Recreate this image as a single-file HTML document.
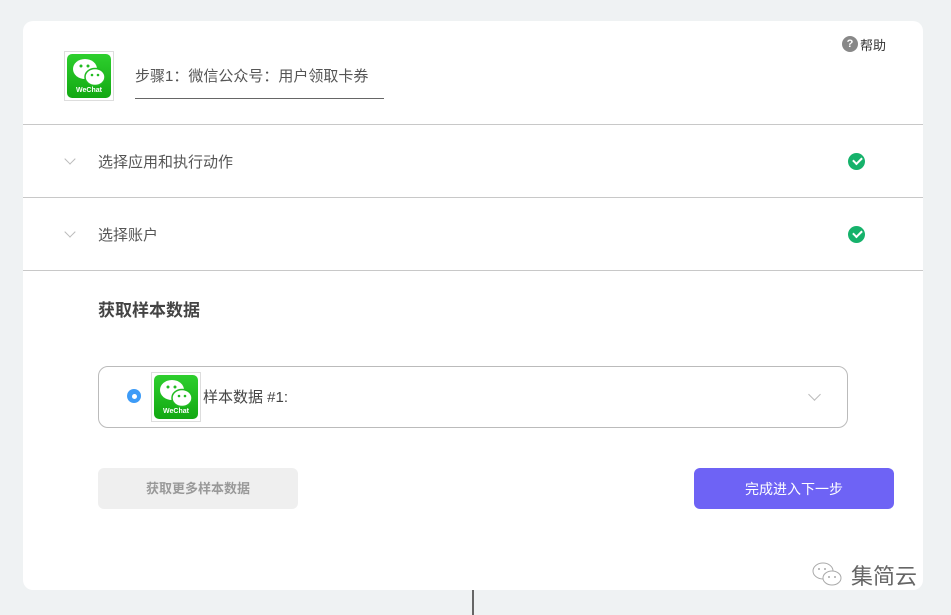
<!DOCTYPE html>
<html><head><meta charset="utf-8"><style>
*{margin:0;padding:0;box-sizing:border-box}
body{width:951px;height:615px;background:#eff2f3;font-family:"Liberation Sans","Noto Sans CJK SC",sans-serif;position:relative;overflow:hidden;color:#555}
.card{position:absolute;left:23px;top:21px;width:900px;height:569px;background:#fff;border-radius:10px}
.abs{position:absolute}
.line{position:absolute;left:0;width:900px;height:1px;background:#c8c8c8}
.wc{position:absolute;border:1px solid #ddd;background:#fff}
.wc .g{position:absolute;left:2px;top:2px;right:2px;bottom:2px;background:linear-gradient(#2ecf2e,#12a812);border-radius:5px}
.wc .t{position:absolute;left:0;right:0;bottom:4px;text-align:center;color:#fff;font-size:7px;font-weight:bold}
.chev{position:absolute;width:8px;height:8px;border-right:1.5px solid #bbb;border-bottom:1.5px solid #bbb;transform:rotate(45deg)}
.ok{position:absolute;width:17px;height:17px;border-radius:50%;background:#16b26b}
.ok:after{content:"";position:absolute;left:5px;top:4px;width:7px;height:4px;border-left:2px solid #fff;border-bottom:2px solid #fff;transform:rotate(-45deg)}
</style></head><body>
<div class="card">
  <div class="wc" style="left:41px;top:30px;width:50px;height:50px"><div class="g">
    <svg class="abs" style="left:4px;top:4px" width="38" height="30"><ellipse cx="14" cy="11" rx="12" ry="10" fill="#fff"/><ellipse cx="24" cy="19" rx="10" ry="8.5" fill="#fff" stroke="#22bb22" stroke-width="1.5"/><circle cx="10" cy="8" r="1.5" fill="#2b2"/><circle cx="17" cy="8" r="1.5" fill="#2b2"/><circle cx="21" cy="17" r="1.3" fill="#2b2"/><circle cx="27" cy="17" r="1.3" fill="#2b2"/></svg>
    <div class="t">WeChat</div></div></div>
  <div class="abs" style="left:112px;top:44px;font-size:15px;color:#555">步骤1：微信公众号：用户领取卡券</div>
  <div class="abs" style="left:112px;top:77px;width:249px;height:1px;background:#666"></div>
  <div class="abs" style="left:819px;top:15px;width:16px;height:16px;border-radius:50%;background:#888;color:#fff;font-size:11px;font-weight:bold;text-align:center;line-height:16px">?</div>
  <div class="abs" style="left:837px;top:14px;font-size:13px;color:#333">帮助</div>
  <div class="line" style="top:103px"></div>
  <div class="chev" style="left:43px;top:134px"></div>
  <div class="abs" style="left:75px;top:130px;font-size:15px">选择应用和执行动作</div>
  <div class="ok" style="left:825px;top:132px"></div>
  <div class="line" style="top:176px"></div>
  <div class="chev" style="left:43px;top:207px"></div>
  <div class="abs" style="left:75px;top:203px;font-size:15px">选择账户</div>
  <div class="ok" style="left:825px;top:205px"></div>
  <div class="line" style="top:249px"></div>
  <div class="abs" style="left:75px;top:275px;font-size:17px;font-weight:bold;color:#444">获取样本数据</div>
  <div class="abs" style="left:75px;top:345px;width:750px;height:62px;border:1px solid #bbb;border-radius:10px"></div>
  <div class="abs" style="left:104px;top:368px;width:14px;height:14px;border-radius:50%;background:#3d9bf7"><div class="abs" style="left:4.5px;top:4.5px;width:5px;height:5px;border-radius:50%;background:#fff"></div></div>
  <div class="wc" style="left:128px;top:351px;width:50px;height:50px"><div class="g">
    <svg class="abs" style="left:4px;top:4px" width="38" height="30"><ellipse cx="14" cy="11" rx="12" ry="10" fill="#fff"/><ellipse cx="24" cy="19" rx="10" ry="8.5" fill="#fff" stroke="#22bb22" stroke-width="1.5"/><circle cx="10" cy="8" r="1.5" fill="#2b2"/><circle cx="17" cy="8" r="1.5" fill="#2b2"/><circle cx="21" cy="17" r="1.3" fill="#2b2"/><circle cx="27" cy="17" r="1.3" fill="#2b2"/></svg>
    <div class="t">WeChat</div></div></div>
  <div class="abs" style="left:180px;top:365px;font-size:15px;color:#444">样本数据 #1:</div>
  <div class="chev" style="left:787px;top:369px;width:9px;height:9px"></div>
  <div class="abs" style="left:75px;top:447px;width:200px;height:41px;background:#efefef;border-radius:6px;text-align:center;line-height:42px;font-size:13px;font-weight:bold;color:#999">获取更多样本数据</div>
  <div class="abs" style="left:671px;top:447px;width:200px;height:41px;background:#6e63f5;border-radius:6px;text-align:center;line-height:42px;font-size:14px;color:#fff">完成进入下一步</div>
  <svg class="abs" style="left:788px;top:540px" width="32" height="30"><ellipse cx="12" cy="10" rx="10" ry="8" fill="none" stroke="#aaa"/><ellipse cx="21" cy="17" rx="9" ry="7" fill="#fff" stroke="#aaa"/><circle cx="8" cy="8" r="1" fill="#aaa"/><circle cx="14" cy="8" r="1" fill="#aaa"/><circle cx="18" cy="16" r="1" fill="#aaa"/><circle cx="24" cy="16" r="1" fill="#aaa"/></svg>
  <div class="abs" style="left:828px;top:538px;font-size:22px;color:#666">集简云</div>
</div>
<div class="abs" style="left:472px;top:590px;width:2px;height:25px;background:#666"></div>
</body></html>
